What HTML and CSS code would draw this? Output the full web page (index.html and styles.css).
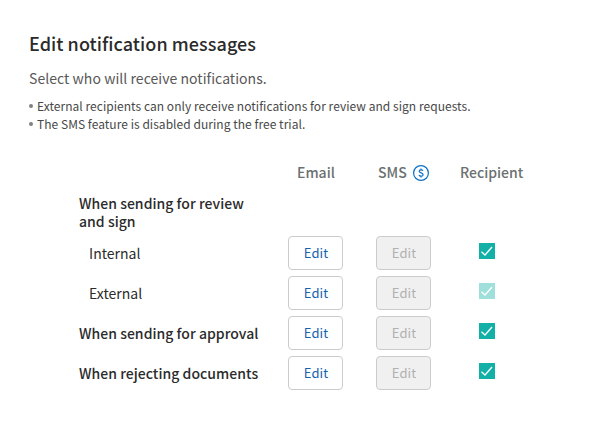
FILE: index.html
```html
<!DOCTYPE html>
<html lang="en">
<head>
<meta charset="utf-8">
<title>Edit notification messages</title>
<link rel="stylesheet" href="styles.css">
</head>
<body>
<main class="panel">
  <h1 class="title">Edit notification messages</h1>
  <p class="lead">Select who will receive notifications.</p>
  <ul class="notes">
    <li>External recipients can only receive notifications for review and sign requests.</li>
    <li>The SMS feature is disabled during the free trial.</li>
  </ul>
  <section class="table">
    <div class="row head">
      <span></span>
      <span>Email</span>
      <span class="sms"><span>SMS</span><svg class="coin" viewBox="0 0 16 16"><circle cx="8" cy="8" r="7.4"/><path d="M10 5.700C9.500 5.100 8.800 4.800 8 4.800c-1 0-1.800.6-1.800 1.500C6.200 8.300 10.100 7.500 10.100 9.700c0 .9-.8 1.500-2 1.500-.9 0-1.700-.3-2.300-1M8 3.500v1.300M8 11.200v1.300"/></svg></span>
      <span class="recipient">Recipient</span>
    </div>
    <div class="row group"><span class="label">When sending for review and sign</span></div>
    <div class="row">
      <span class="label sub">Internal</span>
      <button class="btn">Edit</button><button class="btn" disabled>Edit</button>
      <span class="check"><svg viewBox="0 0 16 16"><path d="M2.500 8.800 6 12l7-8"/></svg></span>
    </div>
    <div class="row">
      <span class="label sub">External</span>
      <button class="btn">Edit</button><button class="btn" disabled>Edit</button>
      <span class="check faded"><svg viewBox="0 0 16 16"><path d="M2.500 8.800 6 12l7-8"/></svg></span>
    </div>
    <div class="row">
      <span class="label">When sending for approval</span>
      <button class="btn">Edit</button><button class="btn" disabled>Edit</button>
      <span class="check"><svg viewBox="0 0 16 16"><path d="M2.500 8.800 6 12l7-8"/></svg></span>
    </div>
    <div class="row">
      <span class="label">When rejecting documents</span>
      <button class="btn">Edit</button><button class="btn" disabled>Edit</button>
      <span class="check"><svg viewBox="0 0 16 16"><path d="M2.500 8.800 6 12l7-8"/></svg></span>
    </div>
  </section>
</main>
</body>
</html>
```
FILE: styles.css
```css
* { box-sizing: border-box; }
body {
  margin: 0;
  background: #fff;
  color: #2b2b2b;
  font-family: "Noto Sans CJK JP", "Noto Sans", sans-serif;
  font-size: 14px;
  line-height: 18px;
}
.panel { padding: 31px 29px 0; }
.title { margin: 0; font-size: 18px; font-weight: 500; line-height: 24px; letter-spacing: .06px; }
.lead { margin: 14px 0 0; color: #585858; line-height: 18px; letter-spacing: .05px; }
.notes { margin: 10px 0 0; padding: 0; list-style: none; color: #484848; font-size: 12px; line-height: 18px; letter-spacing: .04px; }
.notes li { display: flex; align-items: center; gap: 4px; white-space: nowrap; }
.notes li::before { content: ""; width: 4px; height: 4px; border-radius: 50%; background: #808080; }
.table { margin: 30px 0 0 50px; }
.row {
  display: grid;
  grid-template-columns: 209px 88px 64px 95px;
  align-items: center;
  height: 40px;
}
.head { height: 18px; color: #6b7070; font-weight: 500; }
.head > span { white-space: nowrap; }
.head > span:nth-child(2) { padding-left: 9px; }
.sms { display: flex; align-items: center; gap: 6px; padding-left: 2px; }
.recipient { padding-left: 20px; }
.coin { width: 16px; height: 16px; margin-top: 2px; flex: none; fill: none; stroke: #0b6fc5; stroke-width: 1.200; }
.group { height: 36px; margin: 13px 0 3px; grid-template-columns: 185px; }
.label { font-weight: 500; white-space: nowrap; letter-spacing: .03px; }
.group .label { white-space: normal; }
.sub { padding-left: 10px; font-weight: 400; }
.btn {
  width: 55px;
  height: 34px;
  padding: 0 0 0 1px;
  border: 1px solid #ccc;
  border-radius: 4px;
  background: #fff;
  color: #1463b0;
  font: inherit;
  font-size: 13px;
  letter-spacing: .1px;
}
.btn:disabled { background: #f0f0f0; color: #b0b0b0; }
.check { width: 16px; height: 16px; margin: 0 0 4px 39px; background: #12b0a7; }
.check svg { display: block; width: 16px; height: 16px; fill: none; stroke: #fff; stroke-width: 1.300; }
.faded { background: #a0e0dc; }
```
